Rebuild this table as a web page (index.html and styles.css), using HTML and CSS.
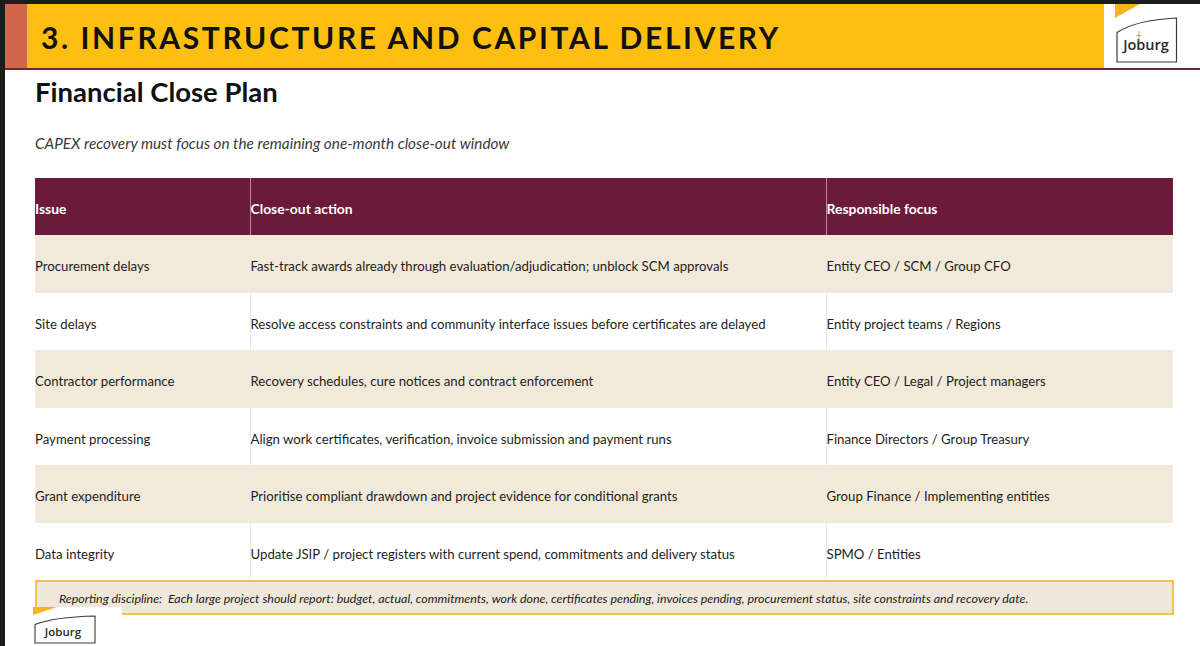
FILE: index.html
```html
<!DOCTYPE html>
<html lang="en">
<head>
<meta charset="utf-8">
<title>Infrastructure and Capital Delivery</title>
<link rel="stylesheet" href="styles.css">
</head>
<body>
<div class="frame">
  <header class="header">
    <div class="accent"></div>
    <div class="title-bar"><h1 class="title">3. INFRASTRUCTURE AND CAPITAL DELIVERY</h1></div>
    <div class="logo-box">
      <span class="corner"></span>
      <svg class="logo" width="62" height="46" viewBox="0 0 62 46">
        <path d="M1 15.5 Q20 3 60.5 1 L60.5 45 L1 45 Z" fill="#fff" stroke="#3a3a3a" stroke-width="1.2"/>
        <text x="30" y="33" text-anchor="middle" font-family="Open Sans, sans-serif" font-weight="600" font-size="14.5" fill="#2a2a2a">Joburg</text>
        <path d="M23 14 L23 25 M20.5 18.5 L25.5 18.5" stroke="#b89a5a" stroke-width="0.9"/>
      </svg>
    </div>
  </header>
  <main class="content">
    <h2 class="heading">Financial Close Plan</h2>
    <p class="subtitle">CAPEX recovery must focus on the remaining one-month close-out window</p>
    <table class="plan">
      <colgroup><col class="c1"><col class="c2"><col class="c3"></colgroup>
      <thead>
        <tr><th>Issue</th><th>Close-out action</th><th>Responsible focus</th></tr>
      </thead>
      <tbody>
        <tr class="tint"><td>Procurement delays</td><td>Fast-track awards already through evaluation/adjudication; unblock SCM approvals</td><td>Entity CEO / SCM / Group CFO</td></tr>
        <tr><td>Site delays</td><td>Resolve access constraints and community interface issues before certificates are delayed</td><td>Entity project teams / Regions</td></tr>
        <tr class="tint"><td>Contractor performance</td><td>Recovery schedules, cure notices and contract enforcement</td><td>Entity CEO / Legal / Project managers</td></tr>
        <tr><td>Payment processing</td><td>Align work certificates, verification, invoice submission and payment runs</td><td>Finance Directors / Group Treasury</td></tr>
        <tr class="tint"><td>Grant expenditure</td><td>Prioritise compliant drawdown and project evidence for conditional grants</td><td>Group Finance / Implementing entities</td></tr>
        <tr><td>Data integrity</td><td>Update JSIP / project registers with current spend, commitments and delivery status</td><td>SPMO / Entities</td></tr>
      </tbody>
    </table>
    <div class="note">Reporting discipline:&nbsp; Each large project should report: budget, actual, commitments, work done, certificates pending, invoices pending, procurement status, site constraints and recovery date.</div>
  </main>
  <div class="footer-logo">
    <span class="corner small"></span>
    <svg class="logo-sm" width="62" height="29" viewBox="0 0 62 29">
      <path d="M1 9.5 Q20 2 61 1 L61 28 L1 28 Z" fill="#fff" stroke="#3a3a3a" stroke-width="1.1"/>
      <text x="29" y="21" text-anchor="middle" font-family="Open Sans, sans-serif" font-weight="600" font-size="11.5" fill="#2a2a2a">Joburg</text>
    </svg>
  </div>
</div>
</body>
</html>
```
FILE: styles.css
```css
* { box-sizing: border-box; }
html, body { margin: 0; padding: 0; }
body {
  width: 1200px;
  height: 646px;
  overflow: hidden;
  background: #ffffff;
  font-family: Lato, "Open Sans", sans-serif;
  color: #1f1f1f;
}
.frame {
  position: relative;
  width: 1200px;
  height: 646px;
  border-top: 4px solid #1c1c1c;
  border-left: 5px solid #1c1c1c;
}
.header {
  display: flex;
  height: 66px;
  border-bottom: 2px solid #6e2a33;
}
.accent {
  width: 22px;
  background: #d0674c;
}
.title-bar {
  flex: 1;
  background: #fdbf0f;
  display: flex;
  align-items: center;
  padding-left: 14px;
}
.title {
  margin: 0;
  font-size: 30px;
  font-weight: 700;
  letter-spacing: 2.6px;
  color: #111;
  padding-top: 2px;
}
.logo-box {
  position: relative;
  width: 96px;
  background: #fff;
  padding: 13px 0 0 12px;
}
.corner {
  position: absolute;
  left: 11px;
  top: 0;
  width: 0;
  height: 0;
  border-top: 14px solid #f7b322;
  border-right: 25px solid transparent;
}
.logo { display: block; }
.content {
  padding-left: 30px;
}
.heading {
  margin: 7px 0 0;
  font-size: 27.5px;
  font-weight: 700;
  color: #111;
  line-height: 30px;
}
.subtitle {
  margin: 27px 0 0;
  font-size: 15.3px;
  font-style: italic;
  color: #3a3a3a;
  line-height: 18px;
}
.plan {
  margin-top: 26px;
  width: 1138px;
  border-collapse: collapse;
  table-layout: fixed;
  font-size: 13.2px;
}
.c1 { width: 215px; }
.c2 { width: 576px; }
.c3 { width: 347px; }
.plan th {
  height: 57px;
  background: #6b1a3a;
  color: #fff;
  text-align: left;
  font-weight: 700;
  font-size: 13.9px;
  padding: 3px 0 0;
  border-left: 1px solid #b08b96;
}
.plan td {
  height: 57.5px;
  padding: 5px 0 0;
  border-left: 1px solid #efe9e2;
  color: #1e1e1e;
}
.plan th:first-child, .plan td:first-child { border-left: none; }
.plan tr.tint td { background: #f1e9d9; }
.note {
  width: 1139px;
  height: 35px;
  border: 2px solid #f1c446;
  background: #efe7d9;
  font-size: 12.4px;
  font-style: italic;
  color: #222;
  padding: 9px 0 0 22px;
  white-space: nowrap;
}
.footer-logo {
  position: absolute;
  left: 28px;
  top: 603px;
  width: 89px;
  height: 39px;
  background: #fff;
  padding: 8px 0 0 1px;
}
.corner.small {
  left: 0;
  border-top: 8px solid #f7b322;
  border-right: 24px solid transparent;
}
.logo-sm { display: block; }
```
